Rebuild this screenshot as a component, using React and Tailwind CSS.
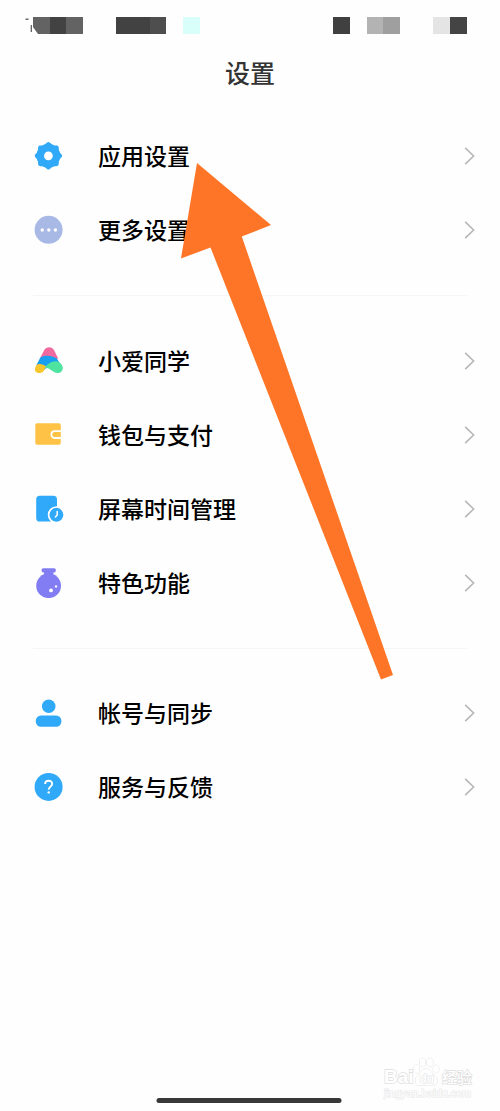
const statusBlocks = [
  "ml-[33px] bg-[#636363]",
  "bg-[#424242]",
  "bg-[#636363]",
  "ml-[33.3px] bg-[#424242]",
  "bg-[#424242]",
  "bg-[#4e4e4e]",
  "ml-[17px] bg-[#d9fffb]",
  "ml-[133px] bg-[#404040]",
  "ml-[17px] bg-[#b3b3b3]",
  "bg-[#9f9f9f]",
  "ml-[33px] bg-[#e4e4e4]",
  "bg-[#444444]",
];

const GearIcon = () => (
  <>
    <circle cx="14.4" cy="14.8" r="11.8" fill="#30a9f8" />
    <g fill="#30a9f8">
      {[0, 45, 90, 135, 180, 225, 270, 315].map((angle) => (
        <path
          key={angle}
          d="M9.6 4.2C11.8 3.6 12.6 1.1 14.4 1.1S17 3.6 19.2 4.2L18 8H10.8Z"
          transform={`rotate(${angle} 14.4 14.8)`}
        />
      ))}
    </g>
    <circle cx="14.4" cy="14.8" r="4.4" fill="#fff" />
  </>
);

const MoreIcon = () => (
  <>
    <circle cx="14.6" cy="14.8" r="14" fill="#a8b9e6" />
    <circle cx="8.2" cy="15" r="1.7" fill="#fff" />
    <circle cx="14.8" cy="15" r="1.7" fill="#fff" />
    <circle cx="21.4" cy="15" r="1.7" fill="#fff" />
  </>
);

const AssistantIcon = () => (
  <>
    <path d="M6 12.2L10 4.6C12.2 .2 18 .2 20.2 4.6L24.2 12.6L15 15Z" fill="#f0699f" />
    <path d="M2.2 19.5L6.2 11.8C10.5 8.6 18 9.5 22.6 12.2L26.3 18L18 17.5L10 24Z" fill="#189ff0" />
    <path d="M2.2 19.2C4.8 17 9 18 12.4 20.6L9.6 24.9C7.8 27.3 3.8 27.8 1.8 25.7C.3 24.2.8 21.9 2.2 19.2Z" fill="#f6c62c" />
    <path d="M10.8 21.7C15.1 15.5 21.6 13.3 26.2 17.1C29.8 20.2 29.5 24.7 26.3 26.4C23.2 27.8 20.7 26.8 18.6 25.1C16.5 23.4 13.8 21.7 10.8 21.7Z" fill="#4ee4a0" />
  </>
);

const WalletIcon = () => (
  <>
    <rect x="1.3" y="3.2" width="25.5" height="21.6" rx="2" fill="#fdc246" />
    <path d="M27 11.2H20.8C16.2 11.2 16.2 18 20.8 18H27" fill="none" stroke="#fff" strokeWidth="1.8" />
  </>
);

const ScreenTimeIcon = () => (
  <>
    <rect x="2.2" y="1.8" width="20.8" height="25.8" rx="3.6" fill="#30a9fb" />
    <circle cx="22.4" cy="20.8" r="7.8" fill="#30a9fb" stroke="#fff" strokeWidth="1.7" />
    <path d="M23.2 17.6V20.9L21.4 23" fill="none" stroke="#fff" strokeWidth="1.5" strokeLinecap="round" />
  </>
);

const FlaskIcon = () => (
  <>
    <rect x="7.6" y=".2" width="14.2" height="4.2" rx="1.6" fill="#837df3" />
    <path d="M10 3H19.4V7H10Z" fill="#837df3" />
    <circle cx="14.6" cy="17.7" r="12.4" fill="#837df3" />
    <circle cx="17" cy="22.4" r="1.9" fill="#fff" />
    <circle cx="22" cy="18.4" r="1.2" fill="#fff" />
  </>
);

const AccountIcon = () => (
  <>
    <circle cx="14.7" cy="8.3" r="6.8" fill="#30a9f8" />
    <rect x="1.8" y="17.6" width="25.6" height="11.2" rx="5.2" fill="#30a9f8" />
  </>
);

const HelpIcon = () => (
  <>
    <circle cx="14.6" cy="14.9" r="14" fill="#30a9f8" />
    <path
      d="M11.1 12.1C11.1 7.5 18.4 7.6 18.2 12C18.1 14.4 14.8 14.6 14.7 17.6"
      fill="none"
      stroke="#fff"
      strokeWidth="1.9"
    />
    <circle cx="14.7" cy="20.4" r="1.2" fill="#fff" />
  </>
);

const groups = [
  [
    { label: "应用设置", Icon: GearIcon },
    { label: "更多设置", Icon: MoreIcon },
  ],
  [
    { label: "小爱同学", Icon: AssistantIcon },
    { label: "钱包与支付", Icon: WalletIcon },
    { label: "屏幕时间管理", Icon: ScreenTimeIcon },
    { label: "特色功能", Icon: FlaskIcon },
  ],
  [
    { label: "帐号与同步", Icon: AccountIcon },
    { label: "服务与反馈", Icon: HelpIcon },
  ],
];

function Row({ label, Icon }) {
  return (
    <button className="flex h-[74px] w-full items-center pl-[34px] pr-[25px] text-left">
      <svg viewBox="0 0 30 30" className="h-[30px] w-[30px] shrink-0">
        <Icon />
      </svg>
      <span className="ml-[34px] flex-1 pb-[2px] text-[23px] leading-[30px] font-medium text-black">{label}</span>
      <svg viewBox="0 0 11 18" className="h-[18px] w-[11px] shrink-0" fill="none" stroke="#b7b7b7" strokeWidth="1.6">
        <path d="M1.2 .9L9.6 9L1.2 17.1" />
      </svg>
    </button>
  );
}

function Watermark() {
  return (
    <div className="absolute top-[1055px] left-[384px] w-[92px] font-['Liberation_Sans',sans-serif] text-white [paint-order:stroke_fill] [-webkit-text-stroke:1.4px_#dedede]">
      <div className="flex h-[32px] items-end">
        <span className="w-[28px] text-[19px] leading-[20px] font-bold">Bai</span>
        <svg viewBox="0 0 28 30" className="h-[30px] w-[28px] shrink-0" fill="#fff" stroke="#dedede" strokeWidth="1">
          <ellipse cx="4.5" cy="12" rx="3" ry="4" />
          <ellipse cx="10.5" cy="5.5" rx="3" ry="4.2" />
          <ellipse cx="18" cy="5.5" rx="3" ry="4.2" />
          <ellipse cx="24" cy="12" rx="3" ry="4" />
          <path d="M14 12C9.5 12 9 16.5 6 18.5C2 21.5 2.5 28.5 8 28.5H20.5C26 28.5 26.5 21.5 22.5 18.5C19.5 16.5 18.5 12 14 12Z" />
          <text x="7.5" y="26" fontSize="12" fontWeight="bold">du</text>
        </svg>
        <span className="ml-[2px] font-['Noto_Sans_CJK_SC',sans-serif] text-[15px] leading-[20px] font-medium whitespace-nowrap">
          经验
        </span>
      </div>
      <div className="text-[10.8px] leading-[13px] whitespace-nowrap [-webkit-text-stroke:1px_#e6e6e6]">jingyan.baidu.com</div>
    </div>
  );
}

export default function App() {
  return (
    <div className="relative flex h-[1111px] w-[500px] flex-col overflow-hidden bg-[#fefefe] font-['Noto_Sans_CJK_SC',sans-serif]">
      {/* Status bar */}
      <div className="relative flex h-[50px] shrink-0 items-center">
        {statusBlocks.map((block, i) => (
          <span key={i} className={`h-[17px] w-[16.7px] shrink-0 ${block}`} />
        ))}
        <svg viewBox="0 0 16 20" className="absolute top-[16px] left-[24px] h-[20px] w-[16px]">
          <path d="M1.5 3.2H4.5" stroke="#555" strokeWidth="1.3" />
          <path d="M7.3 9V16" stroke="#555" strokeWidth="1.2" />
          <path d="M9 11L14 18H9Z" fill="#fefefe" />
        </svg>
      </div>

      <h1 className="flex h-[46px] shrink-0 items-center justify-center text-[25px] font-medium text-[#333]">设置</h1>

      {/* Setting groups */}
      <div className="flex flex-col pt-[23px]">
        {groups.map((items, i) => (
          <div key={i}>
            {i > 0 && <div className="mx-[33px] mt-[28px] mb-[27.5px] h-px bg-[#f5f5f5]" />}
            {items.map((item) => (
              <Row key={item.label} {...item} />
            ))}
          </div>
        ))}
      </div>

      {/* Home indicator */}
      <div className="mx-auto mt-auto mb-[8px] h-[5px] w-[185px] -translate-x-[1.5px] rounded-full bg-[#383838]" />

      <svg viewBox="0 0 500 1111" className="pointer-events-none absolute inset-0 h-full w-full">
        <path d="M197 163L271 225L241.8 236.5L393 675L381 679.5L210.5 247.5L181 258.5Z" fill="#ff7527" />
      </svg>

      <Watermark />
    </div>
  );
}
